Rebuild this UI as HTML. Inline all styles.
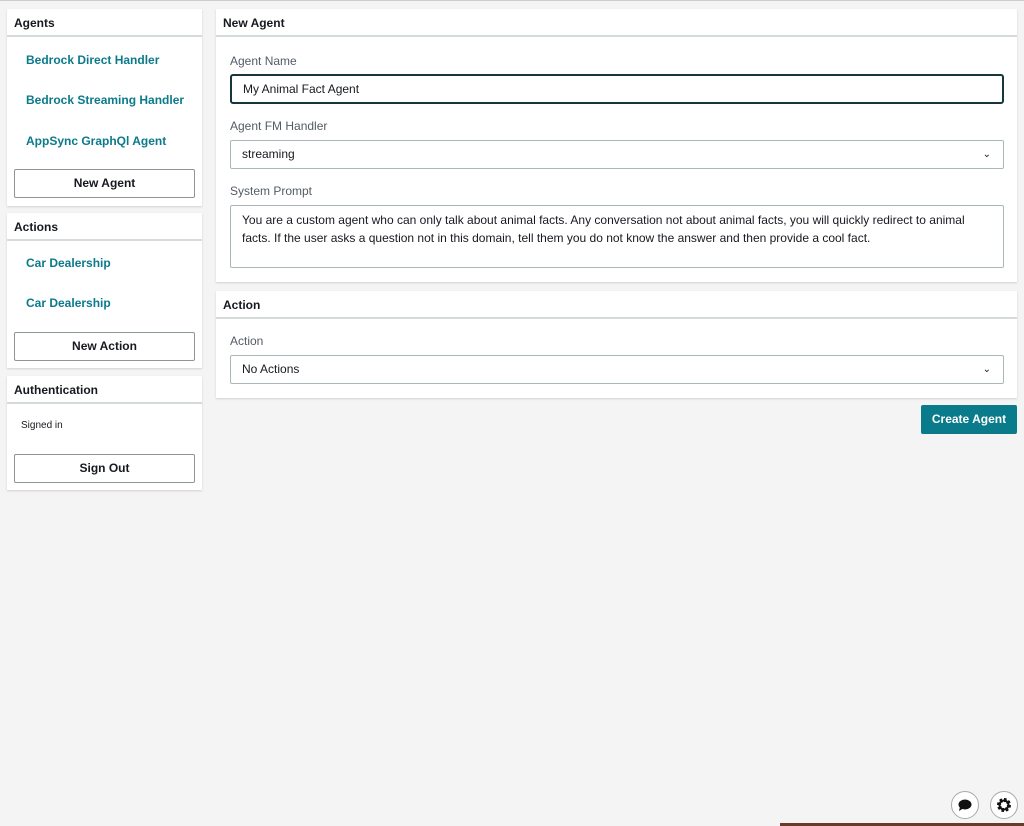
<!DOCTYPE html>
<html><head><style>
*{box-sizing:border-box;margin:0;padding:0}
body{width:1024px;height:825px;background:#f4f4f4;font-family:"Liberation Sans",sans-serif;color:#16191f;position:relative;overflow:hidden;border-top:1px solid #ccc}
.card{position:absolute;background:#fff;box-shadow:0 1px 2px rgba(0,0,0,.15)}
.hd{height:28px;border-bottom:2px solid #d5dbdb;font-weight:bold;font-size:12px;padding:7px 7px 0}
.lk{position:absolute;left:19px;color:#0b7a8a;font-weight:bold;font-size:12px}
.btn{position:absolute;left:7px;width:181px;height:29px;border:1px solid #8d9696;border-radius:2px;font-weight:bold;font-size:12px;text-align:center;line-height:27px}
.lb{position:absolute;left:14px;font-size:12px;color:#545b64}
.in{position:absolute;left:14px;width:774px;border:1px solid #aab7b8;border-radius:2px;font-size:12px;padding:0 11px;line-height:27px}
.chev{position:absolute;right:12px;top:0;font-size:10px}
</style></head><body>
<div class="card" style="left:7px;top:8px;width:195px;height:197px">
<div class="hd">Agents</div>
<div class="lk" style="top:44px">Bedrock Direct Handler</div>
<div class="lk" style="top:84px">Bedrock Streaming Handler</div>
<div class="lk" style="top:125px">AppSync GraphQl Agent</div>
<div class="btn" style="top:160px">New Agent</div>
</div>
<div class="card" style="left:7px;top:212px;width:195px;height:155px">
<div class="hd">Actions</div>
<div class="lk" style="top:43px">Car Dealership</div>
<div class="lk" style="top:83px">Car Dealership</div>
<div class="btn" style="top:119px">New Action</div>
</div>
<div class="card" style="left:7px;top:375px;width:195px;height:114px">
<div class="hd">Authentication</div>
<div style="position:absolute;left:14px;top:44px;font-size:10px">Signed in</div>
<div class="btn" style="top:78px">Sign Out</div>
</div>
<div class="card" style="left:216px;top:8px;width:801px;height:273px">
<div class="hd">New Agent</div>
<div class="lb" style="top:45px">Agent Name</div>
<div class="in" style="top:65px;height:30px;border:2px solid #16353d;border-radius:3px;line-height:26px">My Animal Fact Agent</div>
<div class="lb" style="top:110px">Agent FM Handler</div>
<div class="in" style="top:131px;height:29px">streaming<span class="chev">&#8964;</span></div>
<div class="lb" style="top:175px">System Prompt</div>
<div class="in" style="top:196px;height:63px;line-height:18px;padding-top:5px">You are a custom agent who can only talk about animal facts. Any conversation not about animal facts, you will quickly redirect to animal facts. If the user asks a question not in this domain, tell them you do not know the answer and then provide a cool fact.</div>
</div>
<div class="card" style="left:216px;top:290px;width:801px;height:107px">
<div class="hd">Action</div>
<div class="lb" style="top:43px">Action</div>
<div class="in" style="top:64px;height:29px">No Actions<span class="chev">&#8964;</span></div>
</div>
<div style="position:absolute;left:921px;top:404px;width:96px;height:29px;background:#0a7b8a;color:#fff;font-weight:bold;font-size:12px;text-align:center;line-height:29px;border-radius:2px">Create Agent</div>
<div style="position:absolute;left:951px;top:790px;width:28px;height:28px;border:1px solid #aaa;border-radius:50%;background:#fff"><svg width="26" height="26" viewBox="0 0 26 26"><ellipse cx="13" cy="12.5" rx="6.5" ry="5" fill="#111"/><path d="M8 15 L7 19 L11 16.5Z" fill="#111"/></svg></div>
<div style="position:absolute;left:990px;top:790px;width:28px;height:28px;border:1px solid #aaa;border-radius:50%;background:#fff"><svg width="26" height="26" viewBox="0 0 26 26"><circle cx="13" cy="13" r="5" fill="none" stroke="#111" stroke-width="4" stroke-dasharray="2.2 1.7"/><circle cx="13" cy="13" r="4.5" fill="none" stroke="#111" stroke-width="2"/></svg></div>
<div style="position:absolute;left:780px;top:822px;width:244px;height:3px;background:#6b3b2a"></div>
</body></html>
